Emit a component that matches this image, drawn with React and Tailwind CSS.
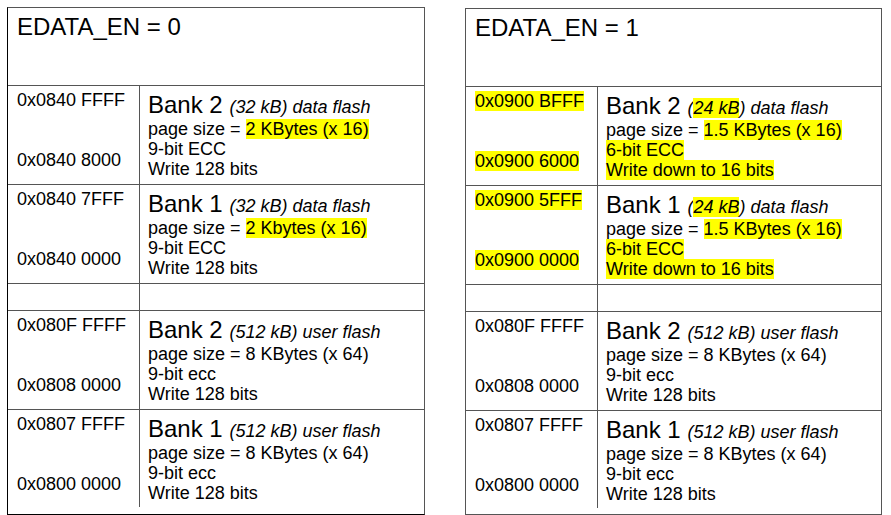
import React from 'react';

const Mark = ({ on, children }) =>
  on ? <span className="inline-block bg-[#ffff00] leading-[20px]">{children}</span> : <>{children}</>;

const leftRows = [
  { hi: '0x0840 FFFF', lo: '0x0840 8000', bank: 'Bank 2', size: '32 kB', kind: 'data flash', page: '2 KBytes (x 16)', ecc: '9-bit ECC', write: 'Write 128 bits', markPage: true },
  { hi: '0x0840 7FFF', lo: '0x0840 0000', bank: 'Bank 1', size: '32 kB', kind: 'data flash', page: '2 Kbytes (x 16)', ecc: '9-bit ECC', write: 'Write 128 bits', markPage: true },
];

const rightRows = [
  { hi: '0x0900 BFFF', lo: '0x0900 6000', bank: 'Bank 2', size: '24 kB', kind: 'data flash', page: '1.5 KBytes (x 16)', ecc: '6-bit ECC', write: 'Write down to 16 bits', markAll: true },
  { hi: '0x0900 5FFF', lo: '0x0900 0000', bank: 'Bank 1', size: '24 kB', kind: 'data flash', page: '1.5 KBytes (x 16)', ecc: '6-bit ECC', write: 'Write down to 16 bits', markAll: true },
];

const userRows = [
  { hi: '0x080F FFFF', lo: '0x0808 0000', bank: 'Bank 2', size: '512 kB', kind: 'user flash', page: '8 KBytes (x 64)', ecc: '9-bit ecc', write: 'Write 128 bits' },
  { hi: '0x0807 FFFF', lo: '0x0800 0000', bank: 'Bank 1', size: '512 kB', kind: 'user flash', page: '8 KBytes (x 64)', ecc: '9-bit ecc', write: 'Write 128 bits' },
];

const Row = ({ r, last }) => (
  <div className={`grid grid-cols-[132px_1fr] border-t border-[#555] ${last ? 'h-[98px]' : 'h-[99px]'}`}>
    <div className="flex flex-col gap-[40px] border-r border-[#555] pl-[9px] pt-[4px] text-[18px] leading-[20px]">
      <div><Mark on={r.markAll}>{r.hi}</Mark></div>
      <div><Mark on={r.markAll}>{r.lo}</Mark></div>
    </div>
    <div className="pl-[8px] pt-[4px] text-[18px] leading-[20px]">
      <div className="h-[29px] whitespace-nowrap text-[24px] leading-[29px]">
        {r.bank}{' '}
        <span className="text-[18px] italic leading-[20px]">
          (<Mark on={r.markAll}>{r.size}</Mark>) {r.kind}
        </span>
      </div>
      <div className="whitespace-nowrap">
        page size = <Mark on={r.markAll || r.markPage}>{r.page}</Mark>
      </div>
      <div><Mark on={r.markAll}>{r.ecc}</Mark></div>
      <div><Mark on={r.markAll}>{r.write}</Mark></div>
    </div>
  </div>
);

const Table = ({ title, rows, outer, className }) => (
  <div className={`flex flex-col border ${outer} ${className}`}>
    <div className="h-[77px] pl-[9px] pt-[7px] text-[24px] leading-[24px]">{title}</div>
    {rows.map((r) => (
      <Row key={r.hi} r={r} />
    ))}
    <div className="grid h-[27px] grid-cols-[132px_1fr] border-t border-[#555]">
      <div className="border-r border-[#555]" />
      <div />
    </div>
    {userRows.map((r, i) => (
      <Row key={r.hi} r={r} last={i === userRows.length - 1} />
    ))}
  </div>
);

export default function App() {
  return (
    <div
      className="flex h-[515px] w-[891px] gap-[40px] bg-white pl-[7px] pt-[7px] text-black"
      style={{ fontFamily: '"Liberation Sans", Arial, sans-serif' }}
    >
      <Table
        title="EDATA_EN = 0"
        rows={leftRows}
        outer="border-[#555] border-l-black border-b-black"
        className="w-[418px]"
      />
      <Table title="EDATA_EN = 1" rows={rightRows} outer="border-[#555]" className="mt-[1px] w-[417px]" />
    </div>
  );
}
